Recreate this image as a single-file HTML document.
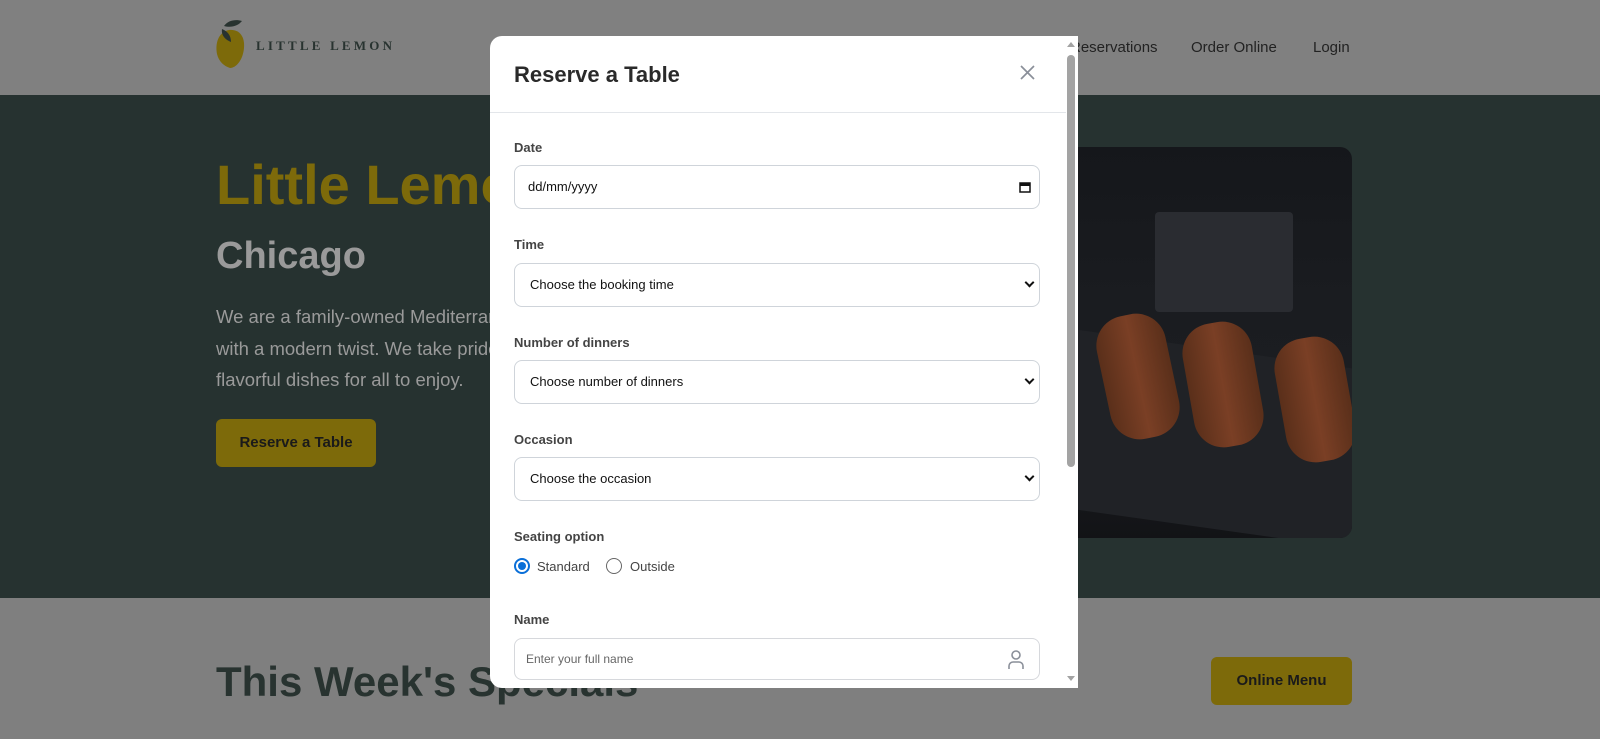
<!DOCTYPE html>
<html><head><style>
*{box-sizing:border-box;margin:0;padding:0}
body{width:1600px;height:739px;overflow:hidden;position:relative;font-family:"Liberation Sans",sans-serif;background:#7f7f7f}
.hdr{position:absolute;left:0;top:0;width:1600px;height:95px;background:#808080}
.hero{position:absolute;left:0;top:95px;width:1600px;height:503px;background:#263230}
.abs{position:absolute;white-space:nowrap}
.modal{position:absolute;left:490px;top:36px;width:588px;height:652px;background:#fff;border-radius:12px 0 0 12px;overflow:hidden}
.lbl{position:absolute;left:24px;font-size:13px;font-weight:bold;color:#444}
.inp{position:absolute;left:24px;width:526px;height:44px;border:1px solid #cfd4da;border-radius:8px;font-size:13px;color:#111;padding-left:15px;line-height:42px}
.arrow{position:absolute;right:6px;top:15px;width:7px;height:7px;border-right:2px solid #111;border-bottom:2px solid #111;transform:rotate(45deg)}
.food{position:absolute;width:70px;height:125px;border-radius:30px;background:linear-gradient(90deg,#5a2f1a,#7a3f25 50%,#5a2f1a)}
</style></head><body>
<div class="hdr"></div>
<svg class="abs" style="left:214px;top:18px" width="36" height="52" viewBox="0 0 36 52">
<path d="M15 12 C4 14 1 26 3 36 C5 44 10 48 16 50 C22 50 29 42 30 30 C31 18 25 11 15 12Z" fill="#7d6a0a"/>
<path d="M10 8 C14 2 22 1 28 3 C24 8 17 10 10 8Z" fill="#283330"/>
<path d="M8 11 C7 18 12 22 17 24 C17 17 13 13 8 11Z" fill="#283330"/>
</svg>
<div class="abs" style="left:256px;top:38px;font-family:'Liberation Serif',serif;font-weight:bold;font-size:13px;letter-spacing:3.2px;color:#283330">LITTLE LEMON</div>
<div class="abs" style="left:1070px;top:39px;font-size:15px;color:#222">Reservations</div>
<div class="abs" style="left:1191px;top:39px;font-size:15px;color:#222">Order Online</div>
<div class="abs" style="left:1313px;top:39px;font-size:15px;color:#222">Login</div>
<div class="hero"></div>
<div class="abs" style="left:216px;top:152px;font-size:56px;font-weight:bold;color:#7d6a0a">Little Lemon</div>
<div class="abs" style="left:216px;top:235px;font-size:38px;font-weight:bold;color:#9a9a9a">Chicago</div>
<div class="abs" style="left:216px;top:301px;font-size:18.5px;line-height:31.5px;color:#9a9a9a">We are a family-owned Mediterranean<br>with a modern twist. We take pride<br>flavorful dishes for all to enjoy.</div>
<div class="abs" style="left:216px;top:419px;width:160px;height:48px;background:#7d6a0a;border-radius:6px;font-size:15px;font-weight:bold;color:#1a1a1a;text-align:center;line-height:48px">Reserve a Table</div>
<div class="abs" style="left:1040px;top:147px;width:312px;height:391px;border-radius:12px;background:linear-gradient(180deg,#15171b,#1a1c20 40%,#1c1e22 70%,#121316);overflow:hidden">
<div style="position:absolute;left:115px;top:65px;width:138px;height:100px;background:#2a2c31;border-radius:4px"></div>
<div style="position:absolute;left:0;top:200px;width:320px;height:180px;background:#202226;transform:skewY(8deg)"></div>
<div class="food" style="left:63px;top:167px;transform:rotate(-12deg)"></div>
<div class="food" style="left:148px;top:175px;transform:rotate(-10deg)"></div>
<div class="food" style="left:240px;top:190px;transform:rotate(-10deg)"></div>
</div>
<div class="abs" style="left:216px;top:658px;font-size:42px;font-weight:bold;color:#283330">This Week's Specials</div>
<div class="abs" style="left:1211px;top:657px;width:141px;height:48px;background:#7d6a0a;border-radius:6px;font-size:15px;font-weight:bold;color:#1a1a1a;text-align:center;line-height:48px">Online Menu</div>

<div class="modal">
<div class="abs" style="left:24px;top:26px;font-size:22px;font-weight:bold;color:#2a2a2a">Reserve a Table</div>
<svg class="abs" style="left:530px;top:29px" width="15" height="15"><path d="M1 1L14 14M14 1L1 14" stroke="#8a8f99" stroke-width="1.7"/></svg>
<div class="abs" style="left:0;top:76px;width:576px;height:1px;background:#e3e6ea"></div>
<div class="lbl" style="top:104px">Date</div>
<div class="inp" style="top:129px;padding-left:13px">dd/mm/yyyy<svg style="position:absolute;right:8px;top:15px" width="12" height="12"><rect x="1" y="2" width="10" height="9" fill="none" stroke="#111" stroke-width="1.5"/><rect x="1" y="2" width="10" height="3" fill="#111"/></svg></div>
<div class="lbl" style="top:201px">Time</div>
<div class="inp" style="top:227px">Choose the booking time<span class="arrow"></span></div>
<div class="lbl" style="top:299px">Number of dinners</div>
<div class="inp" style="top:324px">Choose number of dinners<span class="arrow"></span></div>
<div class="lbl" style="top:396px">Occasion</div>
<div class="inp" style="top:421px">Choose the occasion<span class="arrow"></span></div>
<div class="lbl" style="top:493px">Seating option</div>
<div class="abs" style="left:24px;top:522px;width:16px;height:16px;border-radius:50%;border:2px solid #0a6fd8;background:#fff"><div style="margin:2px;width:8px;height:8px;border-radius:50%;background:#0a6fd8"></div></div>
<div class="abs" style="left:47px;top:523px;font-size:13px;color:#444">Standard</div>
<div class="abs" style="left:116px;top:522px;width:16px;height:16px;border-radius:50%;border:1px solid #666"></div>
<div class="abs" style="left:140px;top:523px;font-size:13px;color:#444">Outside</div>
<div class="lbl" style="top:576px">Name</div>
<div class="inp" style="top:602px;height:42px;line-height:40px;padding-left:11px;font-size:12px;color:#666;border-color:#d6d8dc">Enter your full name
<svg style="position:absolute;right:14px;top:10px" width="18" height="22"><circle cx="9" cy="6" r="4" fill="none" stroke="#8a8f99" stroke-width="1.6"/><path d="M2 20V17a4 4 0 0 1 4-4h6a4 4 0 0 1 4 4v3" fill="none" stroke="#8a8f99" stroke-width="1.6"/></svg></div>
<div class="abs" style="left:577px;top:19px;width:8px;height:412px;background:#a3a3a3;border-radius:4px"></div>
<div class="abs" style="left:577px;top:6px;width:0;height:0;border-left:4px solid transparent;border-right:4px solid transparent;border-bottom:5px solid #a3a3a3"></div>
<div class="abs" style="left:577px;top:640px;width:0;height:0;border-left:4px solid transparent;border-right:4px solid transparent;border-top:5px solid #a3a3a3"></div>
</div>
</body></html>
